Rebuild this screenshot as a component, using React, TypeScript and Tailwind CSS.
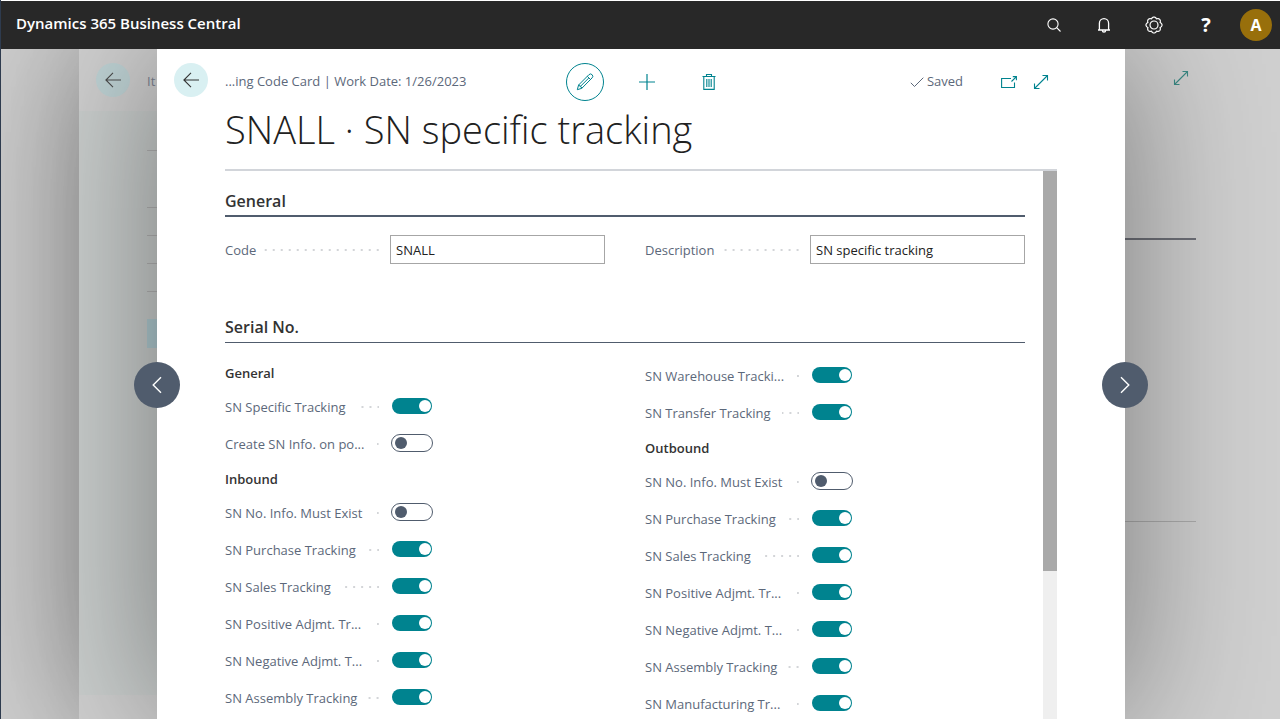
import React, { useId } from "react";

type IconProps = { className?: string };

const BackArrow = ({ className = "" }: IconProps) => (
  <svg width="16" height="16" viewBox="0 0 16 16" fill="none" stroke="currentColor" strokeWidth="1.1" className={className} aria-hidden="true">
    <path d="M16 8H.9M8 .9.9 8 8 15.1" />
  </svg>
);

const SearchIcon = () => (
  <svg width="16" height="16" viewBox="0 0 16 16" fill="none" stroke="currentColor" strokeWidth="1.1" aria-hidden="true">
    <circle cx="7" cy="7" r="5.1" />
    <path d="m10.7 10.7 3.8 3.8" />
  </svg>
);

const BellIcon = () => (
  <svg width="16" height="16" viewBox="0 0 16 16" fill="none" stroke="currentColor" strokeWidth="1.3" aria-hidden="true">
    <path d="M3.4 13V6.2a4.6 4.6 0 0 1 9.2 0V13M2 13h12M6.4 13.4a1.6 1.6 0 0 0 3.2 0" />
  </svg>
);

const gearPoints = Array.from({ length: 96 }, (_, i) => {
  const angle = (i / 96) * Math.PI * 2;
  const radius = 6.6 + 1.4 * Math.abs(Math.cos(angle * 4));
  return `${(9 + radius * Math.cos(angle)).toFixed(2)},${(9 + radius * Math.sin(angle)).toFixed(2)}`;
}).join(" ");

const GearIcon = () => (
  <svg width="18" height="18" viewBox="0 0 18 18" fill="none" stroke="currentColor" strokeWidth="1.2" aria-hidden="true">
    <polygon points={gearPoints} />
    <circle cx="9" cy="9" r="4" />
  </svg>
);

const PencilIcon = () => (
  <svg width="18" height="18" viewBox="0 0 18 18" fill="none" stroke="currentColor" strokeWidth="1" aria-hidden="true">
    <path d="M1.3 16.7 2.6 12 12.9 1.7a2.1 2.1 0 0 1 3.2 3.2L5.8 15.3zM2.6 12l1.3.4.3 1.3 1.2.3.4 1.3M11.3 3.3l3.2 3.2M4.2 13.6l8.5-8.5" />
  </svg>
);

const PlusIcon = () => (
  <svg width="16" height="16" viewBox="0 0 16 16" fill="none" stroke="currentColor" strokeWidth="1.2" aria-hidden="true">
    <path d="M8 0v16M0 8h16" />
  </svg>
);

const TrashIcon = () => (
  <svg width="14" height="18" viewBox="0 0 14 18" fill="none" stroke="currentColor" strokeWidth="1.1" aria-hidden="true">
    <path d="M.5 3.5h13M4.5 3.5v-2h5v2M1.8 3.5v12.9h10.4V3.5M4.8 6v8M7 6v8M9.2 6v8" />
  </svg>
);

const CheckIcon = () => (
  <svg width="14" height="12" viewBox="0 0 14 12" fill="none" stroke="currentColor" strokeWidth="1" aria-hidden="true">
    <path d="m.8 6.8 3.7 3.7L13.3 1.7" />
  </svg>
);

const PopOutIcon = () => (
  <svg width="16" height="12" viewBox="0 0 16 12" fill="none" stroke="currentColor" strokeWidth="1.1" aria-hidden="true">
    <path d="M10 2.5H.6v9h12.9V6.5M10.5 5.5l4.7-4.7M11.8.6h3.6v3.6" />
  </svg>
);

const ExpandIcon = () => (
  <svg width="16" height="16" viewBox="0 0 16 16" fill="none" stroke="currentColor" strokeWidth="1.1" aria-hidden="true">
    <path d="M1.5 14.5l13-13M9.5 1.5h5v5M1.5 9.5v5h5" />
  </svg>
);

const Chevron = ({ className = "" }: IconProps) => (
  <svg width="10" height="18" viewBox="0 0 10 18" fill="none" stroke="currentColor" strokeWidth="1.4" className={className} aria-hidden="true">
    <path d="M9 1.2 1.2 9 9 16.8" />
  </svg>
);

const FieldLabel = ({ id, text, gap = "ml-[11px]" }: { id: string; text: string; gap?: string }) => (
  <label htmlFor={id} className="mr-[11px] flex h-9 w-[154px] shrink-0 items-center whitespace-nowrap text-[13px] leading-5 text-[#5c687a]">
    {text}
    <span
      aria-hidden="true"
      className={`${gap} h-0.5 min-w-[3px] flex-1 bg-[linear-gradient(to_right,transparent_6px,#d3d5d8_6px)] bg-[length:8px_2px] bg-right bg-repeat-x`}
    />
  </label>
);

const TextField = ({ label, value }: { label: string; value: string }) => {
  const id = useId();
  return (
    <div className="flex items-start">
      <FieldLabel id={id} text={label} gap="ml-2" />
      <input
        id={id}
        type="text"
        defaultValue={value}
        className="mt-[3px] h-[29px] w-full min-w-0 border border-[#a6a6a6] bg-white px-[5px] text-[13px] text-[#212121] outline-none"
      />
    </div>
  );
};

const ToggleField = ({ label, on }: { label: string; on: boolean }) => {
  const id = useId();
  return (
    <div className="flex h-[37px] items-start">
      <FieldLabel id={id} text={label} />
      <input
        id={id}
        type="checkbox"
        role="switch"
        defaultChecked={on}
        className="ml-px mt-2 flex h-[18px] w-[42px] shrink-0 appearance-none items-center rounded-full border border-[#505c6d] bg-white bg-clip-padding px-[3px] before:size-3 before:rounded-full before:bg-[#505c6d] checked:justify-end checked:border-transparent checked:bg-[#00838f] checked:px-px checked:before:bg-white"
      />
    </div>
  );
};

type Item = { heading: string } | { label: string; on: boolean };

const inboundColumn: Item[] = [
  { heading: "General" },
  { label: "SN Specific Tracking", on: true },
  { label: "Create SN Info. on po...", on: false },
  { heading: "Inbound" },
  { label: "SN No. Info. Must Exist", on: false },
  { label: "SN Purchase Tracking", on: true },
  { label: "SN Sales Tracking", on: true },
  { label: "SN Positive Adjmt. Tr...", on: true },
  { label: "SN Negative Adjmt. T...", on: true },
  { label: "SN Assembly Tracking", on: true },
];

const outboundColumn: Item[] = [
  { label: "SN Warehouse Tracki...", on: true },
  { label: "SN Transfer Tracking", on: true },
  { heading: "Outbound" },
  { label: "SN No. Info. Must Exist", on: false },
  { label: "SN Purchase Tracking", on: true },
  { label: "SN Sales Tracking", on: true },
  { label: "SN Positive Adjmt. Tr...", on: true },
  { label: "SN Negative Adjmt. T...", on: true },
  { label: "SN Assembly Tracking", on: true },
  { label: "SN Manufacturing Tr...", on: true },
];

const ToggleColumn = ({ items }: { items: Item[] }) => (
  <div className="first:pt-0 last:pt-px">
    {items.map((item, i) =>
      "heading" in item ? (
        <h3 key={i} className="h-8 text-[13px] font-semibold leading-8 text-[#333]">
          {item.heading}
        </h3>
      ) : (
        <ToggleField key={i} label={item.label} on={item.on} />
      ),
    )}
  </div>
);

const TopBar = () => (
  <header className="z-10 flex h-[49px] shrink-0 items-center justify-between border-t border-white bg-[#282828] pl-[15px] pr-2 text-white">
    <span className="pb-1 text-[15px] font-semibold">Dynamics 365 Business Central</span>
    <div className="flex items-center gap-5">
      <div className="flex items-center gap-[18px]">
        <button type="button" aria-label="Search" className="grid size-8 place-items-center"><SearchIcon /></button>
        <button type="button" aria-label="Notifications" className="grid size-8 place-items-center"><BellIcon /></button>
        <button type="button" aria-label="Settings" className="grid size-8 place-items-center"><GearIcon /></button>
      </div>
      <div className="flex items-center gap-[18px]">
        <button type="button" aria-label="Help" className="grid size-8 place-items-center text-xl font-bold">?</button>
        <button type="button" aria-label="Account" className="grid size-8 place-items-center rounded-full bg-[#986f0b] text-base font-bold">A</button>
      </div>
    </div>
  </header>
);

const BackgroundPage = () => (
  <section
    aria-hidden="true"
    className="col-start-1 row-start-1 ml-[78px] flex flex-col bg-[#d0d0d0] shadow-[0_0_140px_rgba(0,0,0,0.38)]"
  >
    <div className="flex h-[62px] items-center justify-between pl-[17px] pr-[91px]">
      <div className="flex items-center gap-[17px]">
        <span className="grid size-[34px] place-items-center rounded-full bg-[#c0d4d6] text-[#4c4c4c]"><BackArrow /></span>
        <span className="pt-1 text-[13px] text-[#7c8290]">It</span>
      </div>
      <span className="pb-1 text-[#3c8a85]"><ExpandIcon /></span>
    </div>
    <div className="flex flex-1 justify-between pr-[84px]">
      <div className="mb-6 flex w-1/4 flex-col bg-[#cbcfce] pl-[68px]">
        <div className="h-10 border-b border-[#b4b4b4]" />
        <div className="h-[57px] border-b border-[#b4b4b4]" />
        <div className="h-7 border-b border-[#b4b4b4]" />
        <div className="h-7 border-b border-[#b4b4b4]" />
        <div className="h-7 border-b border-[#b4b4b4]" />
        <div className="mt-[27px] h-[29px] bg-[#b2cdd3]" />
      </div>
      <div className="flex w-1/4 flex-col">
        <div className="h-[129px] border-b-2 border-[#6e7078]" />
        <div className="h-[282px] border-b border-[#acacac]" />
      </div>
    </div>
  </section>
);

const navButton = "absolute top-1/2 mt-px grid size-[46px] -translate-y-1/2 place-items-center rounded-full bg-[#505c6d] text-white";

const CardDialog = () => (
  <section
    role="dialog"
    aria-label="Item Tracking Code Card"
    className="relative col-start-1 row-start-1 ml-[156px] mr-[155px] flex min-h-0 flex-col bg-white shadow-[0_0_140px_rgba(0,0,0,0.43)]"
  >
    <div className="flex h-[62px] shrink-0 items-center pl-[17px] pr-[68px]">
      <button type="button" aria-label="Back" className="mr-[17px] grid size-[34px] place-items-center rounded-full bg-[#d9f0f2] text-[#333]"><BackArrow /></button>
      <div className="flex min-w-0 flex-1 items-center pt-1">
        <span className="flex-1 whitespace-nowrap text-[13px] text-[#5c687a]">...ing Code Card | Work Date: 1/26/2023</span>
        <div className="ml-5 flex gap-6 text-[#00838f]">
          <button type="button" aria-label="Edit" className="grid size-[38px] place-items-center rounded-full border border-[#00838f]"><PencilIcon /></button>
          <button type="button" aria-label="New" className="grid size-[38px] place-items-center"><PlusIcon /></button>
          <button type="button" aria-label="Delete" className="grid size-[38px] place-items-center"><TrashIcon /></button>
        </div>
        <div className="flex flex-1 items-center justify-end pr-2 text-[#00838f]">
          <span className="mr-[38px] flex items-center gap-[3px] text-[13px] text-[#5c687a]"><CheckIcon />Saved</span>
          <button type="button" aria-label="Open in new window" className="mr-4"><PopOutIcon /></button>
          <button type="button" aria-label="Expand"><ExpandIcon /></button>
        </div>
      </div>
    </div>

    <div className="mx-[68px] flex min-h-0 flex-1 flex-col">
      <h1 className="h-[58px] shrink-0 whitespace-nowrap text-[38px] font-light leading-9 text-[#212121]">SNALL · SN specific tracking</h1>
      <div className="flex min-h-0 flex-1 border-t-2 border-[#d2d5da]">
        <div className="mr-[18px] flex-1 overflow-hidden">
          <h2 className="mt-4 h-[30px] border-b-2 border-[#505c6d] text-base font-semibold leading-7 text-[#333]">General</h2>
          <div className="mt-[15px] grid grid-cols-2 gap-10">
            <TextField label="Code" value="SNALL" />
            <TextField label="Description" value="SN specific tracking" />
          </div>
          <h2 className="mt-[45px] h-[30px] border-b border-[#505c6d] text-base font-semibold leading-7 text-[#333]">Serial No.</h2>
          <div className="mt-[14px] grid grid-cols-2 gap-10">
            <ToggleColumn items={inboundColumn} />
            <ToggleColumn items={outboundColumn} />
          </div>
        </div>
        <div aria-hidden="true" className="w-[14px] shrink-0 bg-[#efefef]">
          <div className="h-[73%] bg-[#a9a9a9]" />
        </div>
      </div>
    </div>

    <button type="button" aria-label="Previous" className={`${navButton} -left-[23px]`}><Chevron /></button>
    <button type="button" aria-label="Next" className={`${navButton} -right-[23px]`}><Chevron className="rotate-180" /></button>
  </section>
);

export default function App() {
  return (
    <div className="flex h-screen flex-col overflow-hidden border-l border-[#2e3b4e] bg-[#d0d0d0] font-['Open_Sans','Noto_Sans',sans-serif]">
      <TopBar />
      <main className="grid min-h-0 flex-1 grid-cols-1 grid-rows-1 overflow-hidden">
        <BackgroundPage />
        <CardDialog />
      </main>
    </div>
  );
}
